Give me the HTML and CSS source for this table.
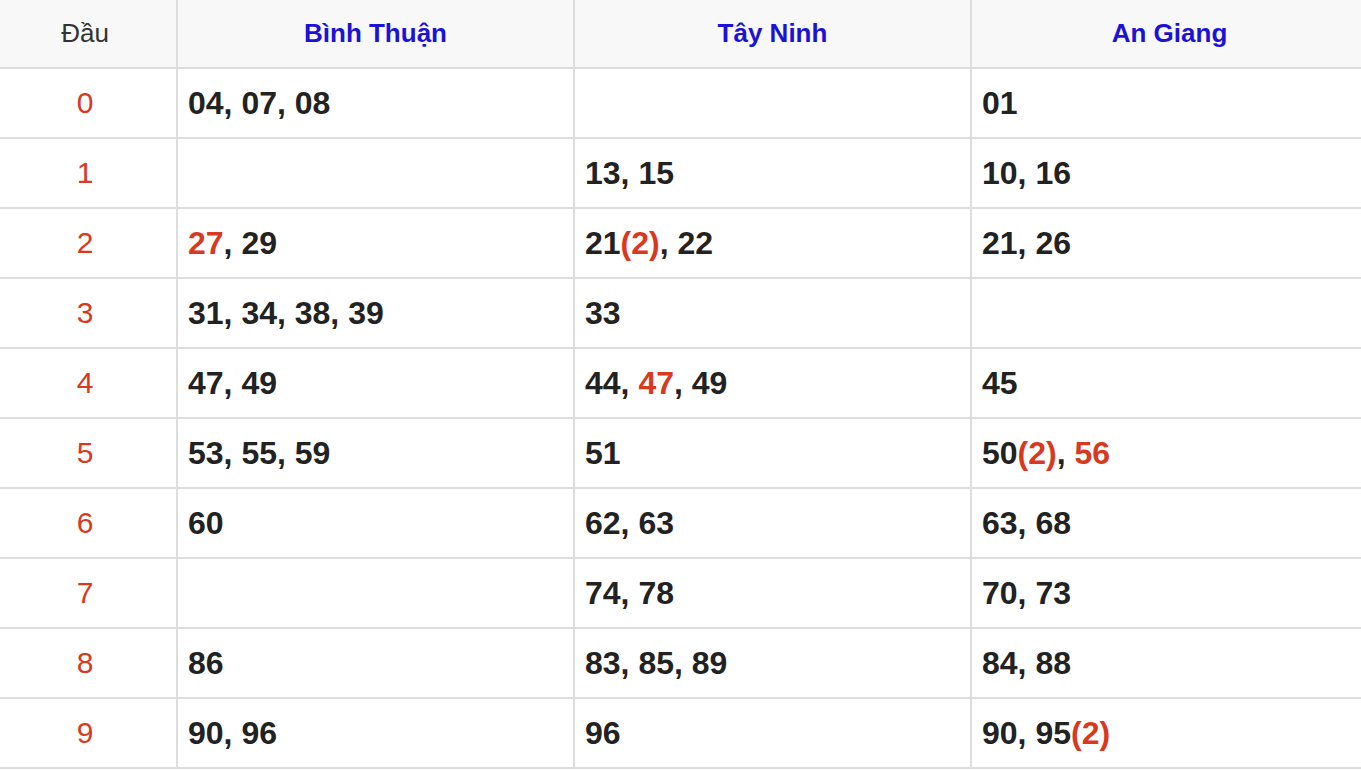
FILE: index.html
```html
<!DOCTYPE html>
<html lang="vi">
<head>
<meta charset="utf-8">
<title>Lô tô đầu</title>
<link rel="stylesheet" href="styles.css">
</head>
<body>
<div class="wrap">
<table class="loto">
  <colgroup>
    <col class="c-dau">
    <col class="c-prov">
    <col class="c-prov">
    <col class="c-prov">
  </colgroup>
  <thead>
    <tr class="head">
      <th class="dau">Đầu</th>
      <th class="prov">Bình Thuận</th>
      <th class="prov">Tây Ninh</th>
      <th class="prov">An Giang</th>
    </tr>
  </thead>
  <tbody>
    <tr><td class="dau">0</td><td>04, 07, 08</td><td></td><td>01</td></tr>
    <tr><td class="dau">1</td><td></td><td>13, 15</td><td>10, 16</td></tr>
    <tr><td class="dau">2</td><td><span class="hl">27</span>, 29</td><td>21<span class="hl">(2)</span>, 22</td><td>21, 26</td></tr>
    <tr><td class="dau">3</td><td>31, 34, 38, 39</td><td>33</td><td></td></tr>
    <tr><td class="dau">4</td><td>47, 49</td><td>44, <span class="hl">47</span>, 49</td><td>45</td></tr>
    <tr><td class="dau">5</td><td>53, 55, 59</td><td>51</td><td>50<span class="hl">(2)</span>, <span class="hl">56</span></td></tr>
    <tr><td class="dau">6</td><td>60</td><td>62, 63</td><td>63, 68</td></tr>
    <tr><td class="dau">7</td><td></td><td>74, 78</td><td>70, 73</td></tr>
    <tr><td class="dau">8</td><td>86</td><td>83, 85, 89</td><td>84, 88</td></tr>
    <tr><td class="dau">9</td><td>90, 96</td><td>96</td><td>90, 95<span class="hl">(2)</span></td></tr>
  </tbody>
</table>
</div>
</body>
</html>
```

FILE: styles.css
```css
html, body {
  margin: 0;
  padding: 0;
  background: #ffffff;
  overflow: hidden;
}

body {
  font-family: "Liberation Sans", Arial, sans-serif;
  color: #222222;
}

.wrap {
  width: 1361px;
  overflow: hidden;
}

.loto {
  width: 1369px;
  table-layout: fixed;
  border-collapse: separate;
  border-spacing: 0;
}

.c-dau { width: 178px; }
.c-prov { width: 397px; }

.loto th,
.loto td {
  box-sizing: border-box;
  border-bottom: 2px solid #dddddd;
  border-right: 2px solid #dddddd;
  vertical-align: middle;
  padding: 0 10px;
  white-space: nowrap;
}

.head {
  height: 69px;
}

.head th {
  background: #f8f8f8;
  font-size: 26px;
  font-weight: bold;
  text-align: center;
  color: #1c12d6;
}

.head th.dau {
  font-weight: normal;
  color: #333333;
}

tbody tr {
  height: 70px;
}

tbody td {
  font-size: 32px;
  font-weight: bold;
  text-align: left;
  color: #222222;
}

.loto .dau {
  text-align: center;
  padding: 0 10px 0 4px;
}

tbody td.dau {
  font-weight: normal;
  font-size: 30px;
  color: #d8391f;
}

.hl {
  color: #d8391f;
}
```
